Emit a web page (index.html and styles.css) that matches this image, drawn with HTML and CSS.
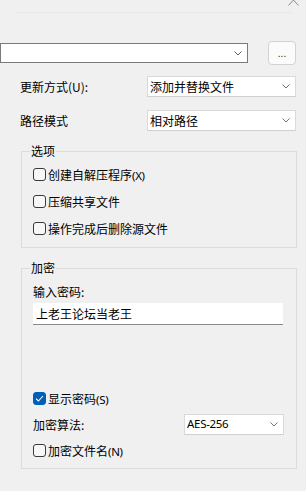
FILE: index.html
```html
<!DOCTYPE html>
<html lang="zh-CN">
<head>
<meta charset="utf-8">
<title>压缩选项</title>
<link rel="stylesheet" href="styles.css">
</head>
<body>
<div class="page">
  <div class="top">
    <div class="top-line"></div>
    <svg class="top-chev" width="11" height="7" viewBox="0 0 11 7"><path d="M0.5 6.5 L5.5 1 L10.5 6.5" fill="none" stroke="#8a8a8a" stroke-width="1"/></svg>
  </div>

  <div class="path-row">
    <div class="combo combo-path">
      <span class="combo-text"></span>
      <svg class="chev" width="8" height="5" viewBox="0 0 8 5"><path d="M0.5 0.5 L4 4 L7.5 0.5" fill="none" stroke="#606060" stroke-width="1"/></svg>
    </div>
    <div class="browse">...</div>
  </div>

  <div class="form-row first">
    <span class="label">更新方式(U):</span>
    <div class="combo combo-wide">
      <span class="combo-text">添加并替换文件</span>
      <svg class="chev" width="8" height="5" viewBox="0 0 8 5"><path d="M0.5 0.5 L4 4 L7.5 0.5" fill="none" stroke="#707070" stroke-width="1"/></svg>
    </div>
  </div>
  <div class="form-row second">
    <span class="label">路径模式</span>
    <div class="combo combo-wide">
      <span class="combo-text">相对路径</span>
      <svg class="chev" width="8" height="5" viewBox="0 0 8 5"><path d="M0.5 0.5 L4 4 L7.5 0.5" fill="none" stroke="#707070" stroke-width="1"/></svg>
    </div>
  </div>

  <div class="group group-options">
    <span class="group-title">选项</span>
    <label class="check-row opt first-check"><span class="box"></span><span>创建自解压程序<span class="latin">(X)</span></span></label>
    <label class="check-row opt"><span class="box"></span><span>压缩共享文件</span></label>
    <label class="check-row opt"><span class="box"></span><span>操作完成后删除源文件</span></label>
  </div>

  <div class="group group-enc">
    <span class="group-title">加密</span>
    <div class="pw-label">输入密码:</div>
    <div class="textbox">上老王论坛当老王</div>
    <label class="check-row show-pw"><span class="box checked"><svg width="9" height="7" viewBox="0 0 9 7"><path d="M1 3.6 L3.4 6 L8 1" fill="none" stroke="#ffffff" stroke-width="1.1"/></svg></span><span>显示密码<span class="latin">(S)</span></span></label>
    <div class="algo-row">
      <span>加密算法:</span>
      <div class="combo combo-algo">
        <span class="combo-text latin">AES-256</span>
        <svg class="chev" width="8" height="5" viewBox="0 0 8 5"><path d="M0.5 0.5 L4 4 L7.5 0.5" fill="none" stroke="#707070" stroke-width="1"/></svg>
      </div>
    </div>
    <label class="check-row"><span class="box"></span><span>加密文件名<span class="latin">(N)</span></span></label>
  </div>
</div>
</body>
</html>
```

FILE: styles.css
```css
html, body {
  margin: 0;
  padding: 0;
}
body {
  background: #f0f0f0;
  color: #000000;
  font-family: "Microsoft YaHei UI", "Noto Sans CJK SC", sans-serif;
  font-size: 12px;
  width: 306px;
  height: 491px;
  overflow: hidden;
}
.page {
  width: 306px;
}
.latin {
  font-family: "Segoe UI", "Noto Sans", "Noto Sans CJK SC", sans-serif;
  font-size: 11.5px;
  letter-spacing: -0.3px;
}
.top {
  position: relative;
  height: 13px;
}
.top-line {
  margin-left: 15px;
  width: 276px;
  height: 12px;
  border-bottom: 1px solid #e6e6e6;
}
.top-chev {
  position: absolute;
  left: 288px;
  top: -1px;
}
.path-row {
  display: flex;
  align-items: center;
  margin-top: 28px;
  height: 24px;
}
.combo {
  display: flex;
  align-items: center;
  justify-content: space-between;
  box-sizing: border-box;
  background: #ffffff;
  border: 1px solid #dadada;
  border-bottom-color: #cfcfcf;
  padding: 0 5px 0 2px;
  line-height: 18px;
}
.combo-path {
  width: 248px;
  height: 20px;
  border: 1px solid #7a7a7a;
}
.browse {
  box-sizing: border-box;
  margin-left: 20px;
  width: 28px;
  height: 24px;
  border: 1px solid #d2d2d2;
  border-radius: 4px;
  background: #fbfbfb;
  text-align: center;
  line-height: 22px;
  font-size: 10px;
  color: #333;
}
.form-row {
  display: flex;
  align-items: center;
  padding-left: 20px;
  height: 21px;
}
.form-row.first {
  margin-top: 11px;
}
.form-row.second {
  margin-top: 13px;
}
.label {
  width: 127px;
}
.combo-wide {
  width: 149px;
  height: 21px;
}
.group {
  box-sizing: border-box;
  margin-left: 21px;
  width: 276px;
  border: 1px solid #dcdcdc;
  padding: 0 0 5px 11px;
}
.group-options {
  margin-top: 20px;
}
.group-enc {
  margin-top: 20px;
}
.group-title {
  display: block;
  width: max-content;
  margin: -9px 0 0 -3px;
  padding: 0 1px;
  background: #f0f0f0;
  line-height: 16px;
  height: 16px;
}
.check-row {
  display: flex;
  align-items: center;
  height: 26px;
}
.check-row.opt {
  height: 27px;
}
.first-check {
  margin-top: 2px;
}
.box {
  box-sizing: border-box;
  width: 13px;
  height: 13px;
  border: 1px solid #3a3a3a;
  border-radius: 3px;
  background: #f7f7f7;
  margin-right: 2px;
  display: flex;
  align-items: center;
  justify-content: center;
}
.box.checked {
  background: #005fb8;
  border-color: #005fb8;
}
.pw-label {
  margin-top: 6px;
  line-height: 20px;
}
.textbox {
  box-sizing: border-box;
  margin-top: 1px;
  width: 250px;
  height: 22px;
  background: #ffffff;
  border-bottom: 1px solid #8a8a8a;
  padding-left: 3px;
  line-height: 21px;
  font-size: 12px;
}
.show-pw {
  margin-top: 60px;
}
.algo-row {
  display: flex;
  align-items: center;
  justify-content: space-between;
  width: 251px;
  height: 26px;
}
.combo-algo {
  width: 100px;
  height: 21px;
}
```
